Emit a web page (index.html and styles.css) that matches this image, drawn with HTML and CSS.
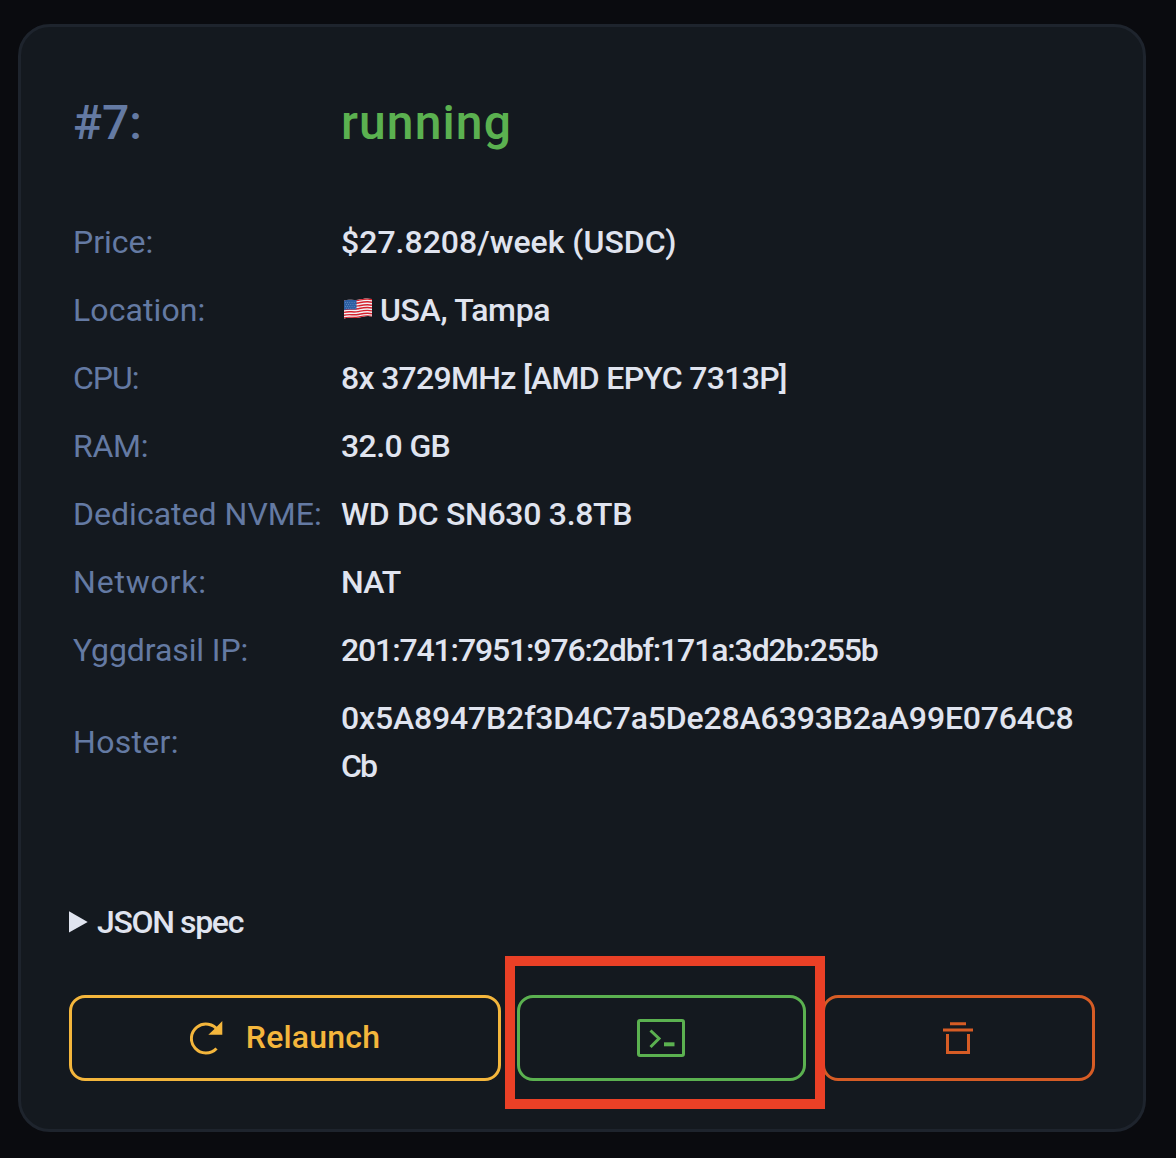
FILE: index.html
```html
<!DOCTYPE html>
<html lang="en">
<head>
<meta charset="utf-8">
<title>Deployment #7</title>
<link rel="stylesheet" href="styles.css">
</head>
<body>
<main class="card">
  <header class="heading">
    <span class="heading-id">#7:</span>
    <span class="heading-status">running</span>
  </header>
  <dl class="specs">
    <dt>Price:</dt><dd>$27.8208/week (USDC)</dd>
    <dt class="ls-location">Location:</dt>
    <dd class="place">
      <svg class="flag" viewBox="0 0 28 22" aria-label="US flag">
        <defs><clipPath id="wave"><path d="M0 2.5C5 1 9 2.7 14 1.7S23-.3 28 1V18.500C23 17 19 18.800 14 19.800S5 19 0 20.500Z"/></clipPath></defs>
        <g clip-path="url(#wave)">
          <rect width="28" height="22" fill="#f3f1f3"/>
          <g fill="none" stroke="#d5212d" stroke-width="1.450">
            <path id="s" d="M0 3C5 1.500 9 3.200 14 2.200S23 .2 28 1.500"/>
            <use href="#s" y="2.850"/><use href="#s" y="5.700"/><use href="#s" y="8.550"/><use href="#s" y="11.400"/><use href="#s" y="14.250"/><use href="#s" y="17"/>
          </g>
          <path d="M0 2C5 .8 9 2.400 12.500 1.600V11.300C9 12.200 5 10.800 0 12Z" fill="#2d5fa3"/>
          <g stroke="#6f97c8" stroke-width=".8" stroke-dasharray=".8 1.400"><path d="M1 4.500H12M2 6.500H12M1 8.500H12M2 10.300H12"/></g>
        </g>
      </svg>
      <span class="ls-city">USA, Tampa</span>
    </dd>
    <dt class="ls-cpu">CPU:</dt><dd class="ls-processor">8x 3729MHz [AMD EPYC 7313P]</dd>
    <dt class="ls-ram">RAM:</dt><dd class="ls-memory">32.0 GB</dd>
    <dt class="ls-drive">Dedicated NVME:</dt><dd class="ls-disk">WD DC SN630 3.8TB</dd>
    <dt class="ls-network">Network:</dt><dd class="ls-nat">NAT</dd>
    <dt class="ls-yggdrasil">Yggdrasil IP:</dt><dd class="ls-ip">201:741:7951:976:2dbf:171a:3d2b:255b</dd>
    <dt class="ls-hoster">Hoster:</dt><dd class="ls-address">0x5A8947B2f3D4C7a5De28A6393B2aA99E0764C8<br><span class="ls-tail">Cb</span></dd>
  </dl>
  <details class="json">
    <summary>
      <svg class="marker" viewBox="0 0 19 22"><path d="M0 .3 18.700 11 0 21.600Z"/></svg>
      <span>JSON spec</span>
    </summary>
  </details>
  <div class="actions">
    <button class="btn btn-relaunch">
      <svg class="icon-relaunch" viewBox="0 0 33 34">
        <path d="M28 9.500A14.500 14.500 0 1 0 26.500 27.400" fill="none" stroke="currentColor" stroke-width="3"/>
        <path d="M32.300 0V13.700H18.300L25.500 7Z" fill="currentColor"/>
      </svg>
      <span>Relaunch</span>
    </button>
    <div class="terminal-slot">
      <button class="btn btn-terminal" aria-label="Terminal">
        <svg class="icon-terminal" viewBox="0 0 48 38" fill="none" stroke="currentColor" stroke-width="3">
          <rect x="1.500" y="1.500" width="45" height="35" rx="1.500"/>
          <path d="M13.500 11.500 22 19.500 13.500 28"/>
          <path d="M27 25.300H37.500" stroke-width="4"/>
        </svg>
      </button>
      <div class="highlight"></div>
    </div>
    <button class="btn btn-delete" aria-label="Delete">
      <svg class="icon-delete" viewBox="0 0 30 32" fill="none" stroke="currentColor" stroke-width="3">
        <path d="M7 1.800H23M0 8H30"/>
        <path d="M4.500 12V30.500H25.500V12"/>
      </svg>
    </button>
  </div>
</main>
</body>
</html>
```

FILE: styles.css
```css
* { box-sizing: border-box; }

body {
  margin: 0;
  height: 1158px;
  padding: 24px 30px 26px 18px;
  background: #0a0b0f;
  color: #e0e4ef;
  font: 500 32px/48px Roboto, "Open Sans", sans-serif;
}

.card {
  height: 1108px;
  padding: 60px 48px 48px;
  border: 3px solid #1e242d;
  border-radius: 32px;
  background: #14191f;
}

.heading,
.specs {
  display: grid;
  grid-template-columns: 268px 1fr;
  padding-left: 4px;
}

.heading { font-size: 48px; line-height: 72px; }
.heading-id { color: #647aa3; letter-spacing: 0; }
.heading-status { color: #5bb150; letter-spacing: 1.1px; }

.specs { margin: 59px 0 0; row-gap: 20px; align-items: center; white-space: nowrap; }
.specs dt { color: #647aa3; font-weight: 400; }
.specs dd { margin: 0; }

.place { display: flex; align-items: center; gap: 8px; }
.flag { width: 28px; height: 22px; margin: 0 0 3px 3px; }

/* Tracking per text */
.ls-location { letter-spacing: .1px; }
.ls-cpu { letter-spacing: -1px; }
.ls-ram { letter-spacing: -.3px; }
.ls-drive { letter-spacing: .02px; }
.ls-network { letter-spacing: .8px; }
.ls-hoster { letter-spacing: .3px; }
.ls-yggdrasil { letter-spacing: -.1px; }
.ls-city { letter-spacing: -.35px; }
.ls-processor { letter-spacing: -.7px; }
.ls-memory { letter-spacing: -.6px; }
.ls-disk { letter-spacing: -.3px; }
.ls-nat { letter-spacing: -.8px; }
.ls-ip { letter-spacing: -1.14px; }
.ls-address { letter-spacing: -.17px; }
.ls-tail { letter-spacing: -1.8px; }

.json { margin-top: 108px; letter-spacing: -1.35px; }
.json summary { display: flex; align-items: center; gap: 9px; list-style: none; }
.marker { width: 19px; height: 22px; fill: currentColor; }

.actions {
  display: grid;
  grid-template-columns: 432px 289px 273px;
  gap: 16px;
  margin-top: 49px;
  width: 1026px;
}

.btn {
  display: flex;
  align-items: center;
  justify-content: center;
  width: 100%;
  height: 86px;
  padding: 0 1px 0 0;
  border: 3px solid currentColor;
  border-radius: 16px;
  background: none;
  font: inherit;
}

.btn-relaunch { gap: 23px; padding: 0; color: #f4b63c; letter-spacing: .2px; }
.btn-relaunch span { margin-bottom: 2px; }
.btn-terminal { color: #5bb150; }
.btn-delete { padding: 0; color: #d65c25; }

.icon-relaunch { width: 33px; height: 34px; }
.icon-terminal { width: 48px; height: 38px; }
.icon-delete { width: 30px; height: 32px; margin-right: 1px; }

.terminal-slot { position: relative; }

.highlight {
  position: absolute;
  z-index: 1;
  left: -12px;
  top: -39px;
  width: 320px;
  height: 153px;
  border: 10px solid #ea4026;
}
```
